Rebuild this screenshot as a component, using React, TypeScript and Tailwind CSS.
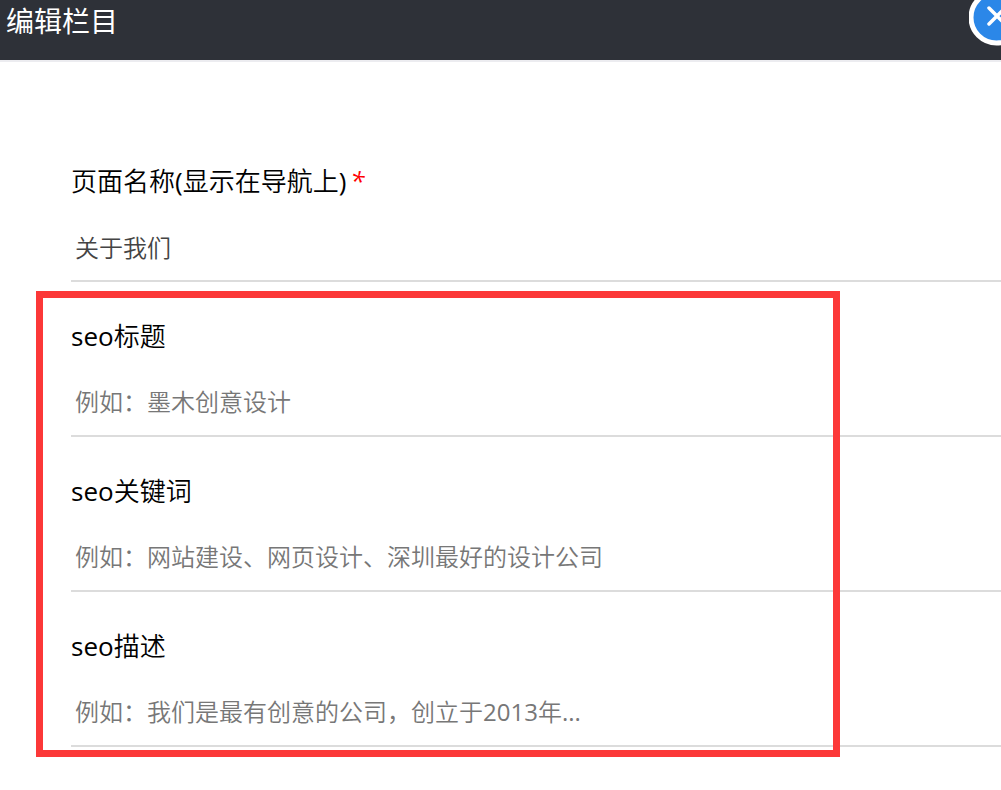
const SEO_FIELDS = [
  { id: "seo-title", label: "seo标题", placeholder: "例如：墨木创意设计" },
  { id: "seo-keywords", label: "seo关键词", placeholder: "例如：网站建设、网页设计、深圳最好的设计公司" },
  { id: "seo-description", label: "seo描述", placeholder: "例如：我们是最有创意的公司，创立于2013年..." },
];

type FieldProps = {
  id: string;
  label: string;
  required?: boolean;
  value?: string;
  placeholder?: string;
};

function Field({ id, label, required, value, placeholder }: FieldProps) {
  return (
    <div className="pt-9">
      <label htmlFor={id} className="block text-[26px] leading-9 text-black">
        {label}
        {required && <em className="ml-1 text-[#ff0000]">*</em>}
      </label>
      <input
        id={id}
        type="text"
        defaultValue={value}
        placeholder={placeholder}
        className="mt-3 block h-[71px] w-full border-b-2 border-[#dcdcdc] bg-transparent px-1 pt-0.5 text-2xl text-[#444] outline-none placeholder:text-[#777]"
      />
    </div>
  );
}

export default function App() {
  return (
    <div className="h-screen overflow-hidden bg-white font-['Open_Sans','Noto_Sans_CJK_SC_DemiLight','Noto_Sans_CJK_SC',sans-serif] font-normal">
      <header className="relative h-[62px] overflow-hidden border-b-2 border-[#ececf0] bg-[#2e3138] px-1.5">
        <h1 className="font-['Noto_Sans_CJK_SC',sans-serif] text-[28px] leading-10 text-white">编辑栏目</h1>
        <button type="button" aria-label="关闭" className="absolute -top-2 -right-6">
          <svg viewBox="0 0 56 56" className="block size-14">
            <circle cx="27.5" cy="25.5" r="25.5" fill="#2b87e8" stroke="#fff" strokeWidth="5" />
            <path d="M20 16l16 16M36 16L20 32" stroke="#fff" strokeWidth="3.5" strokeLinecap="round" />
          </svg>
        </button>
      </header>

      <form className="pt-[65px] pl-[71px]">
        <Field id="page-name" label="页面名称(显示在导航上)" value="关于我们" required />

        <div className="relative">
          {SEO_FIELDS.map((field) => (
            <Field key={field.id} {...field} />
          ))}
          {/* highlight frame */}
          <div className="pointer-events-none absolute top-[9px] right-[161px] -bottom-2.5 -left-[35px] border-[7px] border-[#fc3838]" />
        </div>
      </form>
    </div>
  );
}
